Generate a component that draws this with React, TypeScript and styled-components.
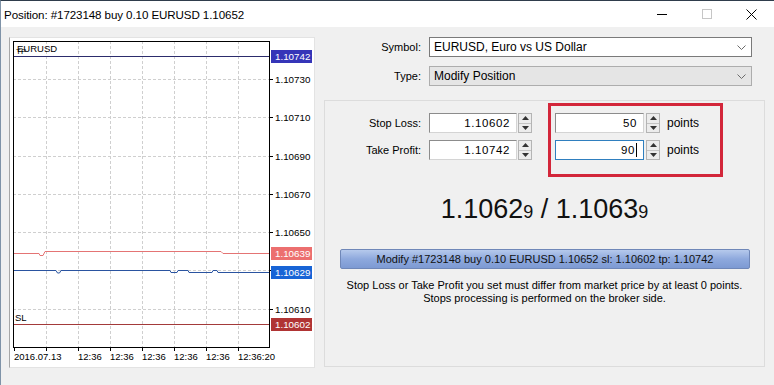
import React from 'react';
import styled, { createGlobalStyle } from 'styled-components';

const GlobalStyle = createGlobalStyle`
    html, body {
        margin: 0;
        padding: 0;
        background: #f0f0f0;
        font-family: "Liberation Sans", Arial, sans-serif;
        color: #000;
    }
`;

const Window = styled.div`
    width: 773px;
    height: 384px;
    border-top: 1px solid #2f3d4c;
    border-left: 1px solid #7f93a8;
    background: #f0f0f0;
    display: flex;
    flex-direction: column;
    overflow: hidden;
`;

const TitleBar = styled.div`
    height: 26px;
    background: #fff;
    display: flex;
    align-items: center;
    padding-left: 3px;
    font-size: 11.6px;
    letter-spacing: -0.1px;
`;

const Title = styled.div`
    flex: 1;
    padding-top: 1px;
`;

const Controls = styled.div`
    display: flex;
    align-items: center;
    height: 100%;
`;

const ControlButton = styled.div`
    width: 45px;
    height: 100%;
    display: flex;
    align-items: center;
    justify-content: center;
`;

const Body = styled.div`
    flex: 1;
    display: flex;
    align-items: flex-start;
    gap: 9px;
    padding: 10px 0 0 8px;
`;

const ChartPanel = styled.div`
    width: 304px;
    height: 329px;
    background: #fff;
    border: 1px solid #e3e3e3;
    border-left-color: #a7a7a7;
`;

const Side = styled.div`
    width: 442px;
    display: flex;
    flex-direction: column;
`;

const FieldRow = styled.div`
    display: grid;
    grid-template-columns: 97px 323px;
    column-gap: 8px;
    align-items: center;
    height: 20px;
    & + & {
        margin-top: 9px;
    }
`;

const Label = styled.div`
    text-align: right;
    font-size: 11px;
    white-space: nowrap;
`;

const Select = styled.div<{ $disabled?: boolean }>`
    height: 20px;
    box-sizing: border-box;
    border: 1px solid ${(p) => (p.$disabled ? '#adadad' : '#7a7a7a')};
    background: ${(p) => (p.$disabled ? '#e5e5e5' : '#fff')};
    display: flex;
    align-items: center;
    justify-content: space-between;
    padding: 0 5px 0 4px;
    font-size: 12px;
`;

const Group = styled.div`
    margin-top: 14px;
    width: 439px;
    height: 265px;
    border: 1px solid #dcdcdc;
    display: flex;
    flex-direction: column;
`;

const Stops = styled.div`
    display: flex;
    align-items: flex-start;
    gap: 16px;
    margin-top: 2px;
`;

const StopsColumn = styled.div`
    display: flex;
    flex-direction: column;
    gap: 7px;
    margin-top: 10px;
`;

const StopRow = styled.div`
    display: flex;
    align-items: center;
    height: 20px;
`;

const StopLabel = styled(Label)`
    width: 96px;
    margin-right: 8px;
`;

const Highlight = styled.div`
    width: 165px;
    height: 61px;
    border: 3px solid #d3263a;
    display: flex;
    flex-direction: column;
    gap: 7px;
    padding: 7px 0 0 4px;
`;

const Input = styled.div<{ $w: number; $focus?: boolean }>`
    width: ${(p) => p.$w}px;
    height: 20px;
    box-sizing: border-box;
    border: 1px solid ${(p) => (p.$focus ? '#2f7fbf' : '#8c8c8c')};
    border-right-color: ${(p) => (p.$focus ? '#2f7fbf' : '#d4d4d4')};
    border-bottom-color: ${(p) => (p.$focus ? '#2f7fbf' : '#d4d4d4')};
    background: #fff;
    display: flex;
    align-items: center;
    justify-content: flex-end;
    padding-right: 6px;
    font-size: 11.5px;
    letter-spacing: 0.6px;
`;

const Caret = styled.span`
    display: inline-block;
    width: 1px;
    height: 14px;
    background: #000;
    margin-left: 1px;
`;

const Spin = styled.div<{ $gap: number }>`
    width: 14px;
    height: 20px;
    margin-left: ${(p) => p.$gap}px;
    box-sizing: border-box;
    border: 1px solid #b4b4b4;
    background: #ececec;
    display: flex;
    flex-direction: column;
`;

const SpinHalf = styled.div`
    flex: 1;
    display: flex;
    align-items: center;
    justify-content: center;
    & + & {
        border-top: 1px solid #c4c4c4;
    }
`;

const Unit = styled.span`
    margin-left: 7px;
    font-size: 12px;
`;

const Price = styled.div`
    margin-top: 17px;
    height: 30px;
    line-height: 30px;
    text-align: center;
    font-size: 27px;
    color: #111;
    small {
        font-size: 18px;
    }
`;

const ModifyButton = styled.div`
    margin: 25px 14px 0 15px;
    height: 20px;
    box-sizing: border-box;
    border: 1px solid #6f87b8;
    border-radius: 2px;
    background: linear-gradient(#b6c9ec, #8ea9dd 50%, #7d9ad3);
    display: flex;
    align-items: center;
    justify-content: center;
    font-size: 11px;
    color: #111;
`;

const Note = styled.div`
    margin-top: 10px;
    text-align: center;
    font-size: 11px;
    line-height: 13px;
`;

const Chevron = () => (
    <svg width="9" height="5" viewBox="0 0 9 5">
        <polyline points="0.5,0.5 4.5,4.5 8.5,0.5" fill="none" stroke="#6b6b6b" strokeWidth="1" />
    </svg>
);

const Arrow = ({ up }: { up?: boolean }) => (
    <svg width="7" height="4" viewBox="0 0 7 4">
        <polygon points={up ? '3.5,0 7,4 0,4' : '0,0 7,0 3.5,4'} fill="#333" />
    </svg>
);

const Spinner = ({ gap }: { gap: number }) => (
    <Spin $gap={gap}>
        <SpinHalf>
            <Arrow up />
        </SpinHalf>
        <SpinHalf>
            <Arrow />
        </SpinHalf>
    </Spin>
);

// price -> y on the chart canvas
const py = (p: number) => 79 + ((1.1073 - p) / 0.0002) * 38.3;

// the 1.10630 level sits under the bid tag, so it gets a tick but no label
const gridY = [1.1073, 1.1071, 1.1069, 1.1067, 1.1065, 1.1063, 1.1061];
const hiddenLabel = 1.1063;
const gridX = [46.5, 78.5, 110.5, 142.5, 174.5, 206.5, 238.5];
const timeLabels = [
    { x: 14, t: '2016.07.13' },
    { x: 78, t: '12:36' },
    { x: 110, t: '12:36' },
    { x: 142, t: '12:36' },
    { x: 174, t: '12:36' },
    { x: 206, t: '12:36' },
    { x: 238, t: '12:36:20' },
];
const tags = [
    { p: 1.10742, bg: '#3535b8' },
    { p: 1.10639, bg: '#ec6f6f' },
    { p: 1.10629, bg: '#1764d6' },
    { p: 1.10602, bg: '#b03434' },
];

const Chart = () => (
    <svg width="304" height="329" viewBox="10 38 304 329" fontFamily='"Liberation Sans", Arial, sans-serif'>
        {gridY.map((p) => (
            <g key={p}>
                <line x1="13" x2="269" y1={Math.round(py(p)) + 0.5} y2={Math.round(py(p)) + 0.5} stroke="#cfcfcf" strokeDasharray="3 2" />
                <line x1="269" x2="273" y1={Math.round(py(p)) + 0.5} y2={Math.round(py(p)) + 0.5} stroke="#000" />
                {p !== hiddenLabel && (
                    <text x="275" y={Math.round(py(p)) + 4} fontSize="9.8">
                        {p.toFixed(5)}
                    </text>
                )}
            </g>
        ))}
        {gridX.map((x) => (
            <line key={x} x1={x} x2={x} y1="41" y2="347" stroke="#cfcfcf" strokeDasharray="3 2" />
        ))}
        {[14.5, ...gridX].map((x) => (
            <line key={'t' + x} x1={x} x2={x} y1="347" y2="351" stroke="#000" />
        ))}
        {timeLabels.map((l, i) => (
            <text key={i} x={l.x} y="360" fontSize="9.5">
                {l.t}
            </text>
        ))}
        <line x1="13" x2="269" y1="56.5" y2="56.5" stroke="#2c2c6c" />
        <line x1="13" x2="269" y1="324.5" y2="324.5" stroke="#a33a3a" />
        <path d="M13 253.5 H39 L40 255.5 H43 L45 251.5 H221 L223 253.5 H269" fill="none" stroke="#e47474" />
        <path
            d="M13 270.5 H56 L57.5 273 H59.5 L61 270.5 H170 L171 272.5 H177 L178 270.5 H188 L189 272.5 H212 L213 270.5 H217 L218 272.5 H269"
            fill="none"
            stroke="#2a54a0"
        />
        <rect x="13.5" y="41.5" width="256" height="306" fill="none" stroke="#000" />
        {tags.map((t) => (
            <g key={t.p}>
                <rect x="271" y={Math.round(py(t.p)) - 6} width="41" height="13" fill={t.bg} />
                <text x="275" y={Math.round(py(t.p)) + 4} fontSize="9.8" fill="#fff">
                    {t.p.toFixed(5)}
                </text>
            </g>
        ))}
        <text x="17" y="52" fontSize="9.5">
            EURUSD
        </text>
        <text x="16" y="54" fontSize="8">
            TP
        </text>
        <text x="15" y="321" fontSize="9.5">
            SL
        </text>
    </svg>
);

export default function App() {
    return (
        <>
            <GlobalStyle />
            <Window>
                <TitleBar>
                    <Title>Position: #1723148 buy 0.10 EURUSD 1.10652</Title>
                    <Controls>
                        <ControlButton>
                            <svg width="10" height="1" viewBox="0 0 10 1">
                                <rect width="10" height="1" fill="#000" />
                            </svg>
                        </ControlButton>
                        <ControlButton>
                            <svg width="10" height="10" viewBox="0 0 10 10">
                                <rect x="0.5" y="0.5" width="9" height="9" fill="none" stroke="#c6c6c6" />
                            </svg>
                        </ControlButton>
                        <ControlButton>
                            <svg width="11" height="11" viewBox="0 0 11 11">
                                <path d="M0.5 0.5 L10.5 10.5 M10.5 0.5 L0.5 10.5" stroke="#000" strokeWidth="1" />
                            </svg>
                        </ControlButton>
                    </Controls>
                </TitleBar>
                <Body>
                    <ChartPanel>
                        <Chart />
                    </ChartPanel>
                    <Side>
                        <FieldRow>
                            <Label>Symbol:</Label>
                            <Select>
                                EURUSD, Euro vs US Dollar
                                <Chevron />
                            </Select>
                        </FieldRow>
                        <FieldRow>
                            <Label>Type:</Label>
                            <Select $disabled>
                                Modify Position
                                <Chevron />
                            </Select>
                        </FieldRow>
                        <Group>
                            <Stops>
                                <StopsColumn>
                                    <StopRow>
                                        <StopLabel>Stop Loss:</StopLabel>
                                        <Input $w={88}>1.10602</Input>
                                        <Spinner gap={1} />
                                    </StopRow>
                                    <StopRow>
                                        <StopLabel>Take Profit:</StopLabel>
                                        <Input $w={88}>1.10742</Input>
                                        <Spinner gap={1} />
                                    </StopRow>
                                </StopsColumn>
                                <Highlight>
                                    <StopRow>
                                        <Input $w={89}>50</Input>
                                        <Spinner gap={2} />
                                        <Unit>points</Unit>
                                    </StopRow>
                                    <StopRow>
                                        <Input $w={89} $focus>
                                            90
                                            <Caret />
                                        </Input>
                                        <Spinner gap={2} />
                                        <Unit>points</Unit>
                                    </StopRow>
                                </Highlight>
                            </Stops>
                            <Price>
                                1.1062<small>9</small> / 1.1063<small>9</small>
                            </Price>
                            <ModifyButton>Modify #1723148 buy 0.10 EURUSD 1.10652 sl: 1.10602 tp: 1.10742</ModifyButton>
                            <Note>
                                Stop Loss or Take Profit you set must differ from market price by at least 0 points.
                                <br />
                                Stops processing is performed on the broker side.
                            </Note>
                        </Group>
                    </Side>
                </Body>
            </Window>
        </>
    );
}
